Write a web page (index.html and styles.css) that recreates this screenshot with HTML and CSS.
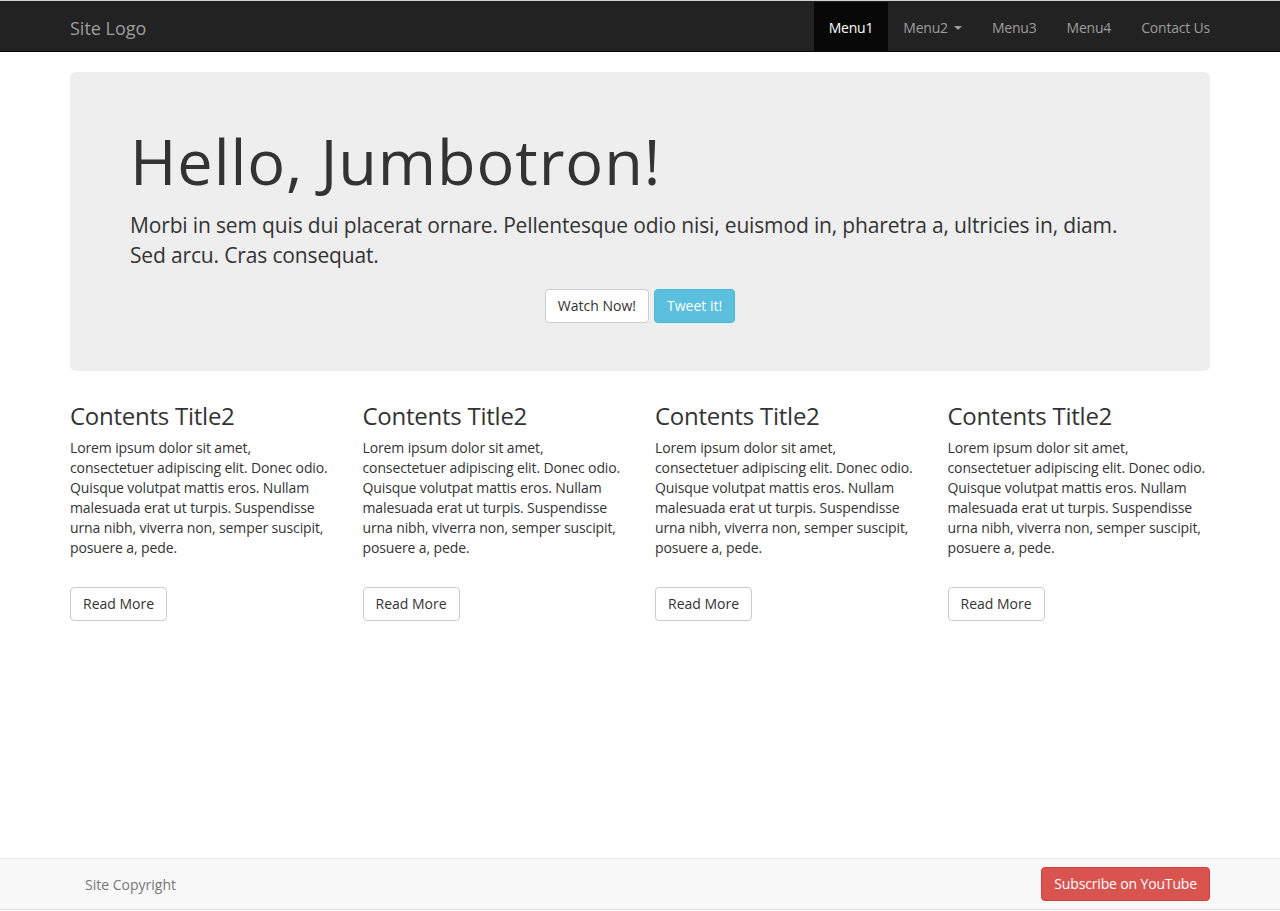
FILE: index.html
```html
<!DOCTYPE html>
<html lang="en">
<head>
<meta charset="utf-8">
<title>Jumbotron</title>
<link rel="stylesheet" href="styles.css">
</head>
<body>
<div class="page">
  <div class="topline"></div>
  <nav class="navbar">
    <div class="container nav-inner">
      <a class="brand" href="#">Site Logo</a>
      <ul class="menu">
        <li class="active"><a href="#">Menu1</a></li>
        <li><a href="#">Menu2 <span class="caret"></span></a></li>
        <li><a href="#">Menu3</a></li>
        <li><a href="#">Menu4</a></li>
        <li><a href="#">Contact Us</a></li>
      </ul>
    </div>
  </nav>

  <main class="main">
    <div class="container">
      <section class="jumbotron">
        <h1>Hello, Jumbotron!</h1>
        <p class="lead">Morbi in sem quis dui placerat ornare. Pellentesque odio nisi, euismod in, pharetra a, ultricies in, diam. Sed arcu. Cras consequat.</p>
        <div class="jumbo-actions">
          <a class="btn btn-default" href="#">Watch Now!</a>
          <a class="btn btn-info" href="#">Tweet it!</a>
        </div>
      </section>

      <div class="row">
        <div class="col">
          <h2>Contents Title2</h2>
          <p>Lorem ipsum dolor sit amet, consectetuer adipiscing elit. Donec odio. Quisque volutpat mattis eros. Nullam malesuada erat ut turpis. Suspendisse urna nibh, viverra non, semper suscipit, posuere a, pede.</p>
          <a class="btn btn-default" href="#">Read More</a>
        </div>
        <div class="col">
          <h2>Contents Title2</h2>
          <p>Lorem ipsum dolor sit amet, consectetuer adipiscing elit. Donec odio. Quisque volutpat mattis eros. Nullam malesuada erat ut turpis. Suspendisse urna nibh, viverra non, semper suscipit, posuere a, pede.</p>
          <a class="btn btn-default" href="#">Read More</a>
        </div>
        <div class="col">
          <h2>Contents Title2</h2>
          <p>Lorem ipsum dolor sit amet, consectetuer adipiscing elit. Donec odio. Quisque volutpat mattis eros. Nullam malesuada erat ut turpis. Suspendisse urna nibh, viverra non, semper suscipit, posuere a, pede.</p>
          <a class="btn btn-default" href="#">Read More</a>
        </div>
        <div class="col">
          <h2>Contents Title2</h2>
          <p>Lorem ipsum dolor sit amet, consectetuer adipiscing elit. Donec odio. Quisque volutpat mattis eros. Nullam malesuada erat ut turpis. Suspendisse urna nibh, viverra non, semper suscipit, posuere a, pede.</p>
          <a class="btn btn-default" href="#">Read More</a>
        </div>
      </div>
    </div>
  </main>

  <footer class="footer">
    <div class="container footer-inner">
      <span class="copyright">Site Copyright</span>
      <a class="btn btn-danger" href="#">Subscribe on YouTube</a>
    </div>
  </footer>
  <div class="bottomline"></div>
</div>
</body>
</html>
```
FILE: styles.css
```css
* { box-sizing: border-box; }
html, body { margin: 0; padding: 0; }
body {
  font-family: "Open Sans", "Noto Sans", "Noto Sans CJK KR", sans-serif;
  font-size: 14px;
  line-height: 20px;
  color: #333;
  background: #fff;
}
a { text-decoration: none; }

.page {
  min-height: 100vh;
  display: flex;
  flex-direction: column;
}

.container {
  width: 1140px;
  margin: 0 auto;
}

.topline { height: 1px; background: #cfcfcf; }

/* navbar */
.navbar {
  background: #222;
  border-top: 1px solid #222;
  border-bottom: 1px solid #080808;
}
.nav-inner {
  display: flex;
  justify-content: space-between;
  align-items: stretch;
  height: 49px;
}
.brand {
  color: #9d9d9d;
  font-size: 18px;
  line-height: 49px;
  padding-top: 2px;
}
.menu {
  display: flex;
  list-style: none;
  margin: 0 -15px 0 0;
  padding: 0;
}
.menu li a {
  display: flex;
  align-items: center;
  height: 49px;
  padding: 2px 15px 0;
  color: #9d9d9d;
  font-size: 14px;
  letter-spacing: -0.2px;
}
.menu li.active a {
  background: #080808;
  color: #fff;
}
.caret {
  display: inline-block;
  width: 0;
  height: 0;
  margin-left: 6px;
  border-top: 4px solid #9d9d9d;
  border-left: 4px solid transparent;
  border-right: 4px solid transparent;
}

/* main */
.main { flex: 1; }

.jumbotron {
  margin-top: 20px;
  background: #eee;
  border-radius: 6px;
  padding: 48px 60px 48px;
}
.jumbotron h1 {
  margin: 6px 0 15px;
  font-size: 63px;
  line-height: 69px;
  font-weight: 400;
  letter-spacing: 0.9px;
  color: #333;
}
.lead {
  margin: 0 0 19px;
  font-size: 21px;
  line-height: 30px;
  letter-spacing: -0.15px;
  color: #333;
}
.jumbo-actions {
  display: flex;
  justify-content: center;
  gap: 5px;
}

.btn {
  display: inline-block;
  padding: 6px 12px;
  font-size: 14px;
  line-height: 20px;
  border: 1px solid transparent;
  border-radius: 4px;
  white-space: nowrap;
}
.btn-default { background: #fff; border-color: #ccc; color: #333; }
.btn-info { background: #5bc0de; border-color: #46b8da; color: #fff; }
.btn-danger { background: #d9534f; border-color: #d43f3a; color: #fff; letter-spacing: -0.15px; }

.row {
  display: grid;
  grid-template-columns: repeat(4, 1fr);
  column-gap: 30px;
  margin-top: 31px;
}
.col h2 {
  margin: 0 0 8px;
  font-size: 24px;
  line-height: 28px;
  font-weight: 400;
  letter-spacing: -0.25px;
  color: #333;
}
.col p {
  margin: 0 0 29px;
  letter-spacing: -0.12px;
}

/* footer */
.footer {
  background: #f8f8f8;
  border-top: 1px solid #e7e7e7;
  border-bottom: 1px solid #dcdcdc;
}
.footer-inner {
  display: flex;
  justify-content: space-between;
  align-items: center;
  height: 50px;
}
.copyright {
  color: #777;
  padding-left: 15px;
  padding-top: 2px;
}
.bottomline { height: 1px; background: #fff; }
```
